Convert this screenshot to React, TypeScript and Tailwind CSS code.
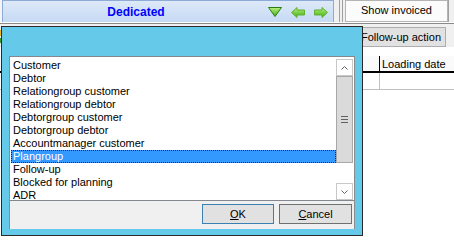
import React from 'react';

const items = [
  'Customer',
  'Debtor',
  'Relationgroup customer',
  'Relationgroup debtor',
  'Debtorgroup customer',
  'Debtorgroup debtor',
  'Accountmanager customer',
  'Plangroup',
  'Follow-up',
  'Blocked for planning',
  'ADR',
];

const selected = 'Plangroup';

function GreenDefs({ id }: { id: string }) {
  return (
    <defs>
      <linearGradient id={id} x1="0" y1="0" x2="0" y2="1">
        <stop offset="0" stopColor="#b8f07a" />
        <stop offset="1" stopColor="#3fae17" />
      </linearGradient>
    </defs>
  );
}

function DownTriangle() {
  return (
    <svg width="14" height="10" viewBox="0 0 14 10">
      <GreenDefs id="gd" />
      <polygon points="0.5,0.5 13.5,0.5 7,9.5" fill="url(#gd)" stroke="#2c7d10" />
    </svg>
  );
}

function Arrow({ dir }: { dir: 'left' | 'right' }) {
  return (
    <svg width="14" height="11" viewBox="0 0 14 11" className={dir === 'right' ? '-scale-x-100' : ''}>
      <GreenDefs id={`ga-${dir}`} />
      <polygon
        points="0.5,5.5 6,0.5 6,3 13.5,3 13.5,8 6,8 6,10.5"
        fill={`url(#ga-${dir})`}
        stroke="#5fb02c"
        strokeLinejoin="round"
      />
    </svg>
  );
}

function Chevron({ up }: { up?: boolean }) {
  return (
    <svg width="7" height="4" viewBox="0 0 7 4">
      <polyline
        points={up ? '0.5,3.5 3.5,0.5 6.5,3.5' : '0.5,0.5 3.5,3.5 6.5,0.5'}
        fill="none"
        stroke="#606060"
        strokeWidth="1"
      />
    </svg>
  );
}

function ScrollBar() {
  return (
    <div className="flex w-[17px] shrink-0 flex-col">
      <div className="flex h-[17px] items-center justify-center border border-[#c8c8c8] bg-white">
        <Chevron up />
      </div>
      <div className="flex h-[87px] flex-col items-center justify-center gap-[2px] border border-[#a8a8a8] bg-[#dadada]">
        <div className="h-px w-[7px] bg-[#606060]" />
        <div className="h-px w-[7px] bg-[#606060]" />
        <div className="h-px w-[7px] bg-[#606060]" />
      </div>
      <div className="flex-1 bg-white" />
      <div className="flex h-[17px] items-center justify-center border border-[#c8c8c8] bg-white">
        <Chevron />
      </div>
    </div>
  );
}

function SelectDialog() {
  return (
    <div className="absolute left-[1px] top-[26px] flex h-[210px] w-[362px] flex-col border border-[#2a2a2a] bg-[#65c9e9] pb-[6px] pl-[7px] pr-[7px] pt-[29px]">
      <div className="flex h-[173px] flex-col border-x border-[#8c8c8c] bg-[#f0f0f0]">
        {/* list */}
        <div className="flex h-[145px] border-y border-[#828790] bg-white pl-px pr-px pt-[2px]">
          <div className="flex-1 overflow-hidden">
            {items.map((it) =>
              it === selected ? (
                <div
                  key={it}
                  className="flex h-[13px] items-center border border-dotted border-[#3a2208] bg-[#3399ff] pl-px leading-[13px] text-white"
                >
                  {it}
                </div>
              ) : (
                <div key={it} className="h-[13px] pl-[2px] leading-[13px] text-black">
                  {it}
                </div>
              ),
            )}
          </div>
          <ScrollBar />
        </div>
        {/* buttons */}
        <div className="flex justify-end gap-[5px] pr-[2px] pt-[3px]">
          <button
            type="button"
            className="flex h-[20px] w-[72px] items-center justify-center border border-[#3c7fb1] bg-[#e1e1e1] text-black"
          >
            <span>
              <u>O</u>K
            </span>
          </button>
          <button
            type="button"
            className="flex h-[20px] w-[73px] items-center justify-center border border-[#707070] bg-[#e1e1e1] text-black"
          >
            <span>
              <u>C</u>ancel
            </span>
          </button>
        </div>
      </div>
    </div>
  );
}

export default function App() {
  return (
    <div className="relative h-[241px] w-[454px] overflow-hidden bg-white font-['Liberation_Sans',Arial,sans-serif] text-[11px] text-black">
      {/* toolbar */}
      <div className="flex h-[22px] bg-[#f0f0f0]">
        <div className="w-[2px] bg-[#f4f4f4]" />
        <div className="flex w-[332px] items-center border border-b-0 border-[#8eaad6] bg-gradient-to-b from-[#dde9f9] to-[#c6daf4]">
          <div className="flex-1 pl-[1px] text-center text-[12px] font-bold text-[#0000ff]">Dedicated</div>
          <div className="flex items-center gap-[9px] pr-[5px] pt-[1px]">
            <DownTriangle />
            <Arrow dir="left" />
            <Arrow dir="right" />
          </div>
        </div>
        <div className="ml-[5px] w-px bg-[#a0a0a0]" />
        <div className="ml-[2px] w-px bg-[#a0a0a0]" />
        <button
          type="button"
          className="ml-[2px] flex w-[103px] items-center justify-center border border-[#b4b4b4] bg-[#fbfbfb] pb-[1px] text-[11px]"
        >
          Show invoiced
        </button>
        <div className="w-px bg-[#a0a0a0]" />
      </div>
      <div className="h-px bg-white" />
      <div className="h-px bg-[#8a8a8a]" />

      {/* second row */}
      <div className="flex h-[23px] justify-between bg-[#f0f0f0] pr-[8px]">
        <div className="flex w-px flex-col pt-[6px]">
          <div className="h-[6px] bg-[#e8b820]" />
          <div className="mt-[2px] h-[5px] bg-[#3c9a2a]" />
        </div>
        <button
          type="button"
          className="mt-[3px] flex h-[20px] w-[94px] items-center justify-center border border-[#adadad] bg-[#e1e1e1] pl-[4px]"
        >
          Follow-up action
        </button>
      </div>

      {/* grid */}
      <div className="mt-[9px] flex h-[17px] border-b-2 border-black bg-[#fafafa]">
        <div className="w-[380px] border-r border-black" />
        <div className="flex-1 pl-[2px] leading-[16px]">Loading date</div>
      </div>
      <div className="flex h-[17px] border-b border-[#c0c0c0]">
        <div className="w-[380px] border-r border-[#c0c0c0]" />
        <div className="flex-1" />
      </div>

      <SelectDialog />
    </div>
  );
}
